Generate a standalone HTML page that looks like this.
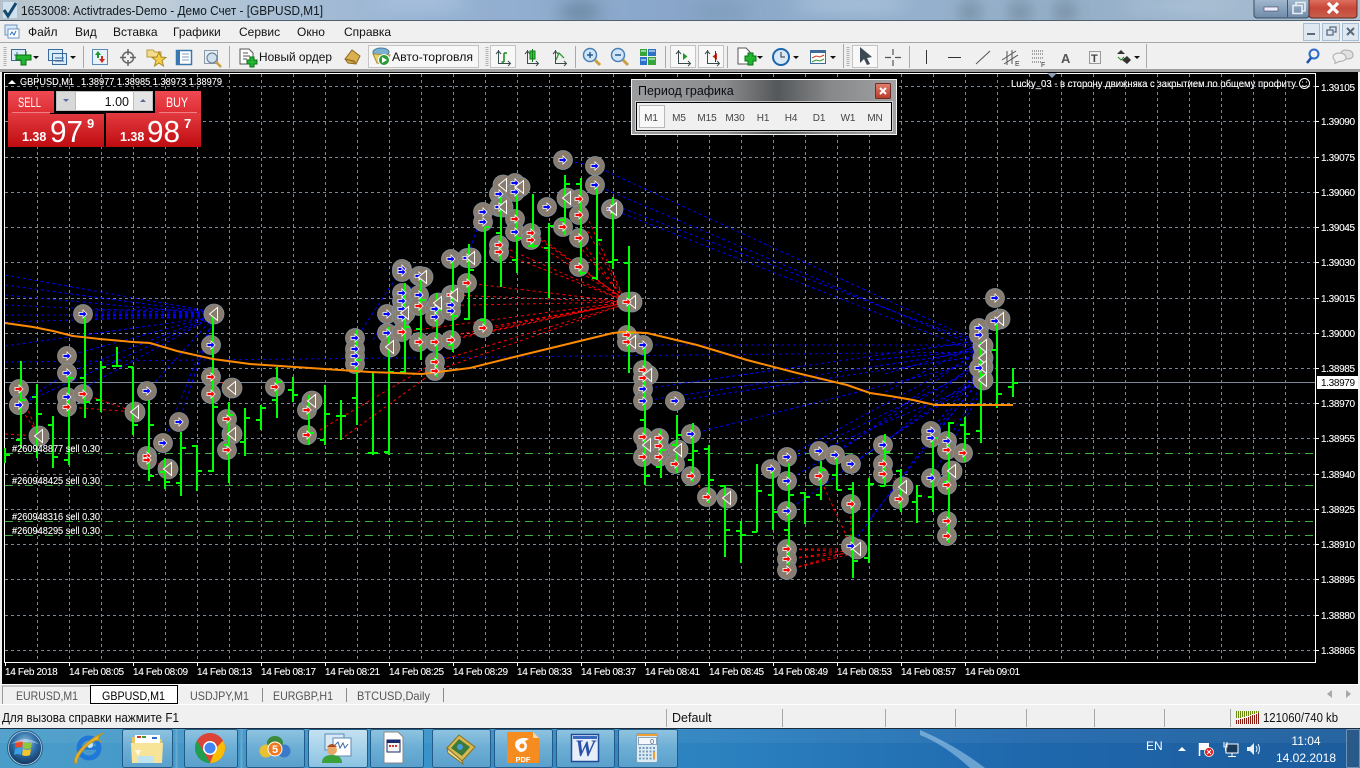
<!DOCTYPE html>
<html><head><meta charset="utf-8"><title>1653008: Activtrades-Demo</title>
<style>
html,body{margin:0;padding:0;width:1360px;height:768px;overflow:hidden;background:#f0f0f0}
svg{position:absolute;left:0;top:0;display:block}
text{font-family:"Liberation Sans","Noto Sans CJK SC",sans-serif}
.m{font-size:12px;fill:#111}
.c{font-size:10px;fill:#fff;letter-spacing:-.35px;stroke:#fff;stroke-width:.1}
.c2{font-size:10.5px;fill:#fff;stroke:#fff;stroke-width:.1}
.p{font-size:10px;fill:#444;text-anchor:middle;letter-spacing:-.1px}
.t{font-size:12px;fill:#555}
.cr{shape-rendering:crispEdges}
.ci{opacity:var(--c,1)}.ar{opacity:var(--a,1)}
</style></head><body>
<svg width="1360" height="768" viewBox="0 0 1360 768" xmlns="http://www.w3.org/2000/svg">
<defs>
<filter id="bl" x="-50%" y="-100%" width="200%" height="300%"><feGaussianBlur stdDeviation="9"/></filter>
<linearGradient id="tg" x1="0" x2="1" y1="0" y2="0"><stop offset="0" stop-color="#aebcc6"/><stop offset=".12" stop-color="#b5c6d4"/><stop offset=".3" stop-color="#8fadd0"/><stop offset=".5" stop-color="#7f9fc6"/><stop offset=".7" stop-color="#8eabc8"/><stop offset=".85" stop-color="#8faac4"/><stop offset="1" stop-color="#a9bfd2"/></linearGradient>
<linearGradient id="red" x1="0" x2="0" y1="0" y2="1"><stop offset="0" stop-color="#e23a40"/><stop offset="1" stop-color="#c00c10"/></linearGradient>
<linearGradient id="red2" x1="0" x2="0" y1="0" y2="1"><stop offset="0" stop-color="#ee4a52"/><stop offset="1" stop-color="#dd2b32"/></linearGradient>
<linearGradient id="tb" x1="0" x2="1" y1="0" y2="0"><stop offset="0" stop-color="#4b9dc9"/><stop offset=".3" stop-color="#3b93c8"/><stop offset=".55" stop-color="#2a7fbe"/><stop offset=".75" stop-color="#1f68ad"/><stop offset="1" stop-color="#1c5c9c"/></linearGradient>
<linearGradient id="btn" x1="0" x2="0" y1="0" y2="1"><stop offset="0" stop-color="#8fc4e0"/><stop offset=".5" stop-color="#6badd4"/><stop offset="1" stop-color="#5aa0cc"/></linearGradient>
<linearGradient id="btna" x1="0" x2="0" y1="0" y2="1"><stop offset="0" stop-color="#c4e2f2"/><stop offset="1" stop-color="#8ac2e2"/></linearGradient>
<linearGradient id="pw" x1="0" x2="1" y1="0" y2="0"><stop offset="0" stop-color="#9a9c9e"/><stop offset=".35" stop-color="#8a8c8e"/><stop offset=".55" stop-color="#55585a"/><stop offset=".75" stop-color="#86888a"/><stop offset="1" stop-color="#a0a2a4"/></linearGradient>
<linearGradient id="close" x1="0" x2="0" y1="0" y2="1"><stop offset="0" stop-color="#e08070"/><stop offset="1" stop-color="#b83a28"/></linearGradient>
<linearGradient id="wclose" x1="0" x2="0" y1="0" y2="1"><stop offset="0" stop-color="#e27a68"/><stop offset=".5" stop-color="#c8483a"/><stop offset="1" stop-color="#c8604c"/></linearGradient>
<linearGradient id="wb" x1="0" x2="0" y1="0" y2="1"><stop offset="0" stop-color="#a6bcd2"/><stop offset="1" stop-color="#6e8aa8"/></linearGradient>
<radialGradient id="orb" cx=".5" cy=".35" r=".7"><stop offset="0" stop-color="#9ac8e4"/><stop offset=".5" stop-color="#2c6ca6"/><stop offset="1" stop-color="#0e2c52"/></radialGradient>
<g id="rc"><circle class="ci" r="9.5" fill="#877c6e" stroke="#80919f" stroke-width=".8"/><path class="ar" d="M-4-1.5H0V-4L4 0 0 4V1.5H-4Z" fill="#f00" stroke="#fff" stroke-width=".8"/></g>
<g id="bc"><circle class="ci" r="9.5" fill="#877c6e" stroke="#80919f" stroke-width=".8"/><path class="ar" d="M-4-1.5H0V-4L4 0 0 4V1.5H-4Z" fill="#00f" stroke="#fff" stroke-width=".8"/></g>
<g id="tr"><circle class="ci" r="10" fill="#877c6e" stroke="#80919f" stroke-width=".8"/><path class="ar" d="M-4.500 0 3.500-6.500V6.500Z" fill="#877c6e" stroke="#fff" stroke-width="1"/></g>
<g id="mk">
<use href="#rc" x="19" y="389"/><use href="#rc" x="19" y="405"/><use href="#bc" x="19" y="405"/><use href="#tr" x="39" y="436"/>
<use href="#bc" x="83" y="314"/><use href="#bc" x="67" y="356"/><use href="#bc" x="67" y="373"/><use href="#bc" x="67" y="397"/><use href="#rc" x="67" y="407"/><use href="#rc" x="83" y="394"/>
<use href="#tr" x="135" y="412"/><use href="#bc" x="147" y="391"/><use href="#bc" x="179" y="422"/><use href="#bc" x="163" y="443"/><use href="#rc" x="147" y="456"/><use href="#rc" x="147" y="460"/><use href="#tr" x="168" y="469"/>
<use href="#tr" x="214" y="314"/><use href="#bc" x="211" y="345"/><use href="#rc" x="211" y="377"/><use href="#rc" x="211" y="394"/><use href="#tr" x="232" y="388"/><use href="#rc" x="227" y="419"/><use href="#tr" x="232" y="434"/><use href="#rc" x="227" y="450"/>
<use href="#rc" x="275" y="387"/><use href="#rc" x="307" y="410"/><use href="#tr" x="312" y="401"/><use href="#rc" x="307" y="435"/>
<use href="#bc" x="355" y="338"/><use href="#bc" x="355" y="349"/><use href="#bc" x="355" y="356"/><use href="#bc" x="355" y="364"/>
<use href="#bc" x="387" y="314"/><use href="#bc" x="387" y="333"/><use href="#tr" x="390" y="347"/><use href="#bc" x="402" y="269"/><use href="#bc" x="402" y="272"/><use href="#bc" x="419" y="276"/><use href="#tr" x="423" y="277"/>
<use href="#bc" x="402" y="293"/><use href="#bc" x="402" y="301"/><use href="#bc" x="402" y="309"/><use href="#bc" x="402" y="317"/><use href="#tr" x="405" y="313"/><use href="#bc" x="419" y="295"/><use href="#rc" x="419" y="306"/><use href="#rc" x="402" y="332"/><use href="#rc" x="419" y="342"/>
<use href="#bc" x="435" y="309"/><use href="#bc" x="435" y="317"/><use href="#tr" x="438" y="303"/><use href="#rc" x="435" y="342"/><use href="#rc" x="435" y="362"/><use href="#rc" x="435" y="371"/><use href="#rc" x="451" y="295"/><use href="#tr" x="454" y="295"/><use href="#bc" x="451" y="305"/><use href="#bc" x="451" y="311"/><use href="#rc" x="451" y="340"/><use href="#bc" x="451" y="259"/><use href="#bc" x="467" y="258"/><use href="#tr" x="471" y="258"/><use href="#rc" x="467" y="283"/>
<use href="#bc" x="483" y="212"/><use href="#bc" x="483" y="222"/><use href="#rc" x="483" y="328"/><use href="#rc" x="499" y="245"/><use href="#rc" x="499" y="252"/><use href="#bc" x="499" y="194"/><use href="#bc" x="499" y="207"/><use href="#tr" x="503" y="185"/><use href="#tr" x="503" y="207"/><use href="#bc" x="515" y="183"/><use href="#bc" x="515" y="192"/><use href="#tr" x="520" y="187"/><use href="#rc" x="515" y="219"/><use href="#bc" x="515" y="232"/><use href="#rc" x="531" y="233"/><use href="#rc" x="531" y="240"/><use href="#bc" x="547" y="207"/>
<use href="#bc" x="563" y="160"/><use href="#rc" x="563" y="227"/><use href="#tr" x="567" y="198"/><use href="#rc" x="579" y="199"/><use href="#rc" x="579" y="215"/><use href="#rc" x="579" y="238"/><use href="#rc" x="579" y="267"/><use href="#bc" x="595" y="166"/><use href="#bc" x="595" y="185"/><use href="#bc" x="611" y="209"/><use href="#tr" x="613" y="209"/>
<use href="#tr" x="632" y="302"/><use href="#rc" x="627" y="302"/><use href="#tr" x="632" y="342"/><use href="#rc" x="627" y="335"/><use href="#rc" x="627" y="342"/>
<use href="#bc" x="643" y="345"/><use href="#tr" x="648" y="375"/><use href="#rc" x="643" y="370"/><use href="#rc" x="643" y="378"/><use href="#bc" x="643" y="389"/><use href="#bc" x="643" y="401"/><use href="#bc" x="675" y="401"/><use href="#bc" x="691" y="434"/>
<use href="#tr" x="647" y="445"/><use href="#rc" x="643" y="437"/><use href="#rc" x="643" y="457"/><use href="#rc" x="659" y="438"/><use href="#rc" x="659" y="446"/><use href="#rc" x="659" y="457"/><use href="#tr" x="678" y="450"/><use href="#rc" x="675" y="464"/><use href="#rc" x="691" y="476"/><use href="#rc" x="707" y="497"/><use href="#tr" x="727" y="498"/>
<use href="#bc" x="771" y="469"/><use href="#bc" x="787" y="457"/><use href="#bc" x="787" y="481"/><use href="#bc" x="787" y="511"/><use href="#rc" x="787" y="549"/><use href="#rc" x="787" y="559"/><use href="#rc" x="787" y="570"/>
<use href="#bc" x="819" y="451"/><use href="#rc" x="819" y="476"/><use href="#bc" x="835" y="455"/><use href="#bc" x="851" y="464"/><use href="#rc" x="851" y="504"/><use href="#tr" x="857" y="549"/><use href="#bc" x="851" y="546"/>
<use href="#bc" x="883" y="445"/><use href="#rc" x="883" y="464"/><use href="#rc" x="883" y="474"/><use href="#tr" x="903" y="487"/><use href="#rc" x="899" y="499"/>
<use href="#bc" x="931" y="431"/><use href="#bc" x="931" y="438"/><use href="#bc" x="931" y="478"/><use href="#bc" x="947" y="441"/><use href="#tr" x="952" y="471"/><use href="#rc" x="947" y="450"/><use href="#rc" x="963" y="453"/><use href="#rc" x="947" y="485"/><use href="#rc" x="947" y="521"/><use href="#rc" x="947" y="536"/>
<use href="#tr" x="983" y="346"/><use href="#tr" x="983" y="358"/><use href="#tr" x="983" y="367"/><use href="#tr" x="983" y="380"/><use href="#bc" x="979" y="328"/><use href="#bc" x="979" y="335"/><use href="#bc" x="979" y="368"/><use href="#bc" x="995" y="298"/><use href="#tr" x="1000" y="319"/><use href="#bc" x="995" y="321"/>
</g>
</defs>

<!-- title bar -->
<rect width="1360" height="21" fill="url(#tg)"/>
<g filter="url(#bl)" opacity=".8"><ellipse cx="100" cy="4" rx="80" ry="5" fill="#d0d8dc"/><ellipse cx="580" cy="12" rx="22" ry="8" fill="#4a6880"/><ellipse cx="720" cy="12" rx="30" ry="6" fill="#6a8aa8"/><ellipse cx="970" cy="12" rx="9" ry="8" fill="#3a5468"/><ellipse cx="1020" cy="12" rx="9" ry="8" fill="#3a5468"/><ellipse cx="1065" cy="12" rx="9" ry="8" fill="#3a5468"/><ellipse cx="420" cy="2" rx="50" ry="5" fill="#b8d0e8"/><ellipse cx="850" cy="4" rx="60" ry="5" fill="#c0d8ec"/><ellipse cx="1180" cy="6" rx="60" ry="5" fill="#b8cfe4"/></g>
<rect y="0" width="1360" height="21" fill="#fff" opacity=".08"/>
<rect y="20" width="1360" height="1" fill="#50606e"/>
<path d="M3 2H17V18H3Z" fill="#cfe0ee"/><path d="M4 10 8 16 16 3" fill="none" stroke="#13486e" stroke-width="3"/>
<text x="21" y="15" fill="#10181c" textLength="302" lengthAdjust="spacingAndGlyphs" style="font-size:12.500px">1653008: Activtrades-Demo - Демо Счет - [GBPUSD,M1]</text>
<!-- window buttons -->
<rect x="1254" y="-2" width="55" height="20" rx="3" fill="url(#wb)" stroke="#3c4e60"/>
<rect x="1309" y="-2" width="48" height="20" rx="3" fill="url(#wclose)" stroke="#5a2a24"/>
<path d="M1287.500 0V17" stroke="#42566a"/>
<rect x="1264" y="7" width="14" height="4" fill="#eef" stroke="#445" stroke-width=".6"/>
<path d="M1293 5.500h9v8h-9zM1296 5V2.500h9V11h-2.500" fill="none" stroke="#e8eef4" stroke-width="1.600"/>
<path d="M1328 3 1338 13M1338 3 1328 13" stroke="#fff" stroke-width="3.200"/>

<!-- menu -->
<rect y="21" width="1360" height="22" fill="#f0f0f0"/>
<rect y="42" width="1360" height="1" fill="#a8a8a8"/>
<path d="M5 25h12v10h-12z" fill="#d8e8f6" stroke="#6a96c4"/><path d="M8 29h11v9H8z" fill="#fff" stroke="#6a96c4"/><path d="M10 35l2-3 2 3 2-4" fill="none" stroke="#2a6ab0"/>
<text class="m" x="28" y="36">Файл</text><text class="m" x="75" y="36">Вид</text><text class="m" x="113" y="36">Вставка</text><text class="m" x="173" y="36">Графики</text><text class="m" x="239" y="36">Сервис</text><text class="m" x="297" y="36">Окно</text><text class="m" x="344" y="36">Справка</text>
<!-- mdi -->
<g fill="#dfe8f1" stroke="#a6bed4"><rect x="1303.500" y="23.500" width="16" height="17"/><rect x="1322.500" y="23.500" width="17" height="17"/><rect x="1342.500" y="23.500" width="16" height="17"/></g>
<path d="M1307 34h8" stroke="#5a6a7c" stroke-width="2"/><path d="M1327 30h6v5h-6zM1330 29v-2h6v5h-2" fill="none" stroke="#5a6a7c" stroke-width="1.300"/><path d="M1347 28l7 7M1354 28l-7 7" stroke="#5a6a7c" stroke-width="2"/>

<!-- toolbar -->
<rect y="43" width="1360" height="27" fill="#f0f0f0"/>
<rect y="69" width="1360" height="3" fill="#a0a0a0"/>
<g stroke="#a9a9a9" fill="none" class="cr"><path d="M83.500 46v22M229.500 46v22M575.500 46v22M665.500 46v22M727.500 46v22M843.500 44v24M909.500 46v22M1146.500 44v24"/></g>
<g stroke="#b0b0b0" stroke-dasharray="1 1" stroke-width="3" fill="none"><path d="M5 47v20M487 47v20M848 47v20"/></g>
<g fill="#e8e8e8" stroke="#c4c4c4"><rect x="368.500" y="45.500" width="110" height="22" fill="#f7f7f7"/><rect x="490.500" y="45.500" width="25" height="22" fill="#f8f8f8"/><rect x="670.500" y="45.500" width="25" height="22" fill="#f8f8f8"/><rect x="698.500" y="45.500" width="25" height="22" fill="#f8f8f8"/><rect x="852.500" y="45.500" width="25" height="22" fill="#f8f8f8"/></g>
<!-- icons left -->
<path d="M11.500 49.500h14v11h-14z" fill="#dcebf8" stroke="#3a6a9a"/><path d="M14 55h6M17 52v6" stroke="#3a6a9a"/>
<path d="M21 55h5v-4h0v4h5v5h-5v5h-5v-5h-5v-5z" fill="#23b52f" stroke="#0a7016"/>
<path d="M33 56h6l-3 3z" fill="#111"/>
<path d="M48.500 49.500h14v11h-14zM52.500 53.500h14v11h-14z" fill="#dcebf8" stroke="#3a6a9a"/><path d="M55 58h9M55 61h9" stroke="#3a6a9a"/>
<path d="M70 56h6l-3 3z" fill="#111"/>
<rect x="92.500" y="49.500" width="15" height="15" fill="#e8f2fa" stroke="#5a8ab8"/><path d="M98 51l3 4h-2v3h-2v-3h-2z" fill="#1f9a2a"/><path d="M102 63l-3-4h2v-3h2v3h2z" fill="#d02a1a"/>
<circle cx="128" cy="57.500" r="5.500" fill="none" stroke="#666" stroke-width="1.500"/><path d="M128 49v6M128 60v6M120 57.500h6M130 57.500h6" stroke="#666" stroke-width="1.500"/>
<path d="M147 50h6l2 2h6v5h-14z" fill="#f5dc8c" stroke="#b89a40"/><path d="M159 52l2 5 5 .5-4 3 1.500 5.500-4.500-3-4.500 3 1.500-5.500-4-3 5-.5z" fill="#f4cf4c" stroke="#a88a20"/>
<rect x="176.500" y="50.500" width="15" height="14" fill="#fff" stroke="#3a76b0" stroke-width="1.500"/><path d="M176 51h4v13h-4z" fill="#3a76b0"/><path d="M182 54h7M182 57h7M182 60h7" stroke="#7a9cc0"/>
<rect x="204.500" y="50.500" width="13" height="13" fill="#e4ecf4" stroke="#8a9aa8"/><circle cx="212" cy="58" r="5" fill="#cfe0ee" stroke="#64788c"/><path d="M216 62l5 5" stroke="#c8a040" stroke-width="2.500"/>
<path d="M240 49h9l4 4v11h-13z" fill="#fff" stroke="#555"/><path d="M243 53h5M243 56h7M243 59h4" stroke="#555"/>
<path d="M247 60h3v-3h4v3h3v4h-3v3h-4v-3h-3z" fill="#23b52f" stroke="#0a7016"/>
<text class="m" x="259" y="61" textLength="73" lengthAdjust="spacingAndGlyphs">Новый ордер</text>
<path d="M345 59l7-9 8 6-4 8-8-1z" fill="#d8b050" stroke="#8a6a20"/><path d="M345 59l9 2 2 3" fill="#b88a30" stroke="#8a6a20"/>
<ellipse cx="381" cy="52" rx="8" ry="4" fill="#7ab0d0" stroke="#4a7a9a"/><path d="M373 54l4 9 8 1 5-9z" fill="#e8d070" stroke="#a89030"/><circle cx="384" cy="60" r="5.500" fill="#2c9a38" stroke="#fff"/><path d="M382 57l5 3-5 3z" fill="#fff"/>
<text class="m" x="392" y="61" textLength="81" lengthAdjust="spacingAndGlyphs">Авто-торговля</text>
<!-- chart types -->
<g fill="none" stroke="#3c4c4c"><path d="M498.500 50v13.500h12M496 54l2.500-3 2.500 3M508 61l2.500 2.500-2.500 2.500"/><path d="M527.500 50v13.500h11M525 54l2.500-3 2.500 3M536 61l2.500 2.500-2.500 2.500"/><path d="M555.500 50v13.500h11M553 54l2.500-3 2.500 3M564 61l2.500 2.500-2.500 2.500"/></g>
<path d="M504 53v9m-2.500 0h2.500m0-9h3" fill="none" stroke="#128a1a" stroke-width="1.500"/>
<rect x="530" y="51" width="5" height="8" fill="#2fce37" stroke="#127a1a"/><path d="M532.500 49v13" stroke="#127a1a"/>
<path d="M556 60l3-7 5 5" fill="none" stroke="#2a9a32" stroke-width="1.300"/>
<g stroke="#4a7fb8" fill="#cfe6f8" stroke-width="1.500"><circle cx="590" cy="55" r="6.500"/><circle cx="618" cy="55" r="6.500"/></g>
<path d="M587 55h6M590 52v6M615 55h6" stroke="#2a5a8a" stroke-width="1.500"/>
<path d="M595 60l5 5M623 60l5 5" stroke="#c8a040" stroke-width="3"/>
<g class="cr"><rect x="640" y="49" width="7" height="7" fill="#38a53c"/><rect x="648" y="49" width="8" height="7" fill="#2e72c8"/><rect x="640" y="57" width="7" height="8" fill="#2e72c8"/><rect x="648" y="57" width="8" height="8" fill="#38a53c"/></g>
<path d="M641 51h5M649 59h6M641 60h5M649 51h6" stroke="#fff"/>
<g fill="none" stroke="#3c4c4c"><path d="M678.500 50v13.500h12M676 54l2.500-3 2.500 3M688 61l2.500 2.500-2.500 2.500M707.500 50v13.500h12M705 54l2.500-3 2.500 3M717 61l2.500 2.500-2.500 2.500"/></g><path d="M683 53l4.500 3.500-4.500 3.500z" fill="#1f9a2a"/><path d="M717 53l-4.500 3.500 4.500 3.500z" fill="#c02a1a"/><path d="M715.500 51v11" stroke="#1a3a6a"/>
<path d="M738 48h8l4 4v12h-12z" fill="#fff" stroke="#555"/><path d="M745 56h3v-3h5v3h3v5h-3v4h-5v-4h-3z" fill="#23b52f" stroke="#0a7016"/><path d="M757 56h6l-3 3z" fill="#111"/>
<circle cx="781" cy="57" r="8" fill="#d8e8f4" stroke="#1a66b0" stroke-width="2"/><path d="M781 52v5h4" fill="none" stroke="#333"/><path d="M793 56h6l-3 3z" fill="#111"/>
<rect x="810.500" y="50.500" width="15" height="13" fill="#fff" stroke="#3c6a98"/><path d="M810 51h16v2h-16z" fill="#3c6a98"/><path d="M812 58l4-2 4 1 4-2" fill="none" stroke="#c04020"/><path d="M812 62l4-2 4 1 4-2" fill="none" stroke="#2a9a32"/><path d="M830 56h6l-3 3z" fill="#111"/>
<path d="M860 47l0 16 4-4 3 6 3-1-3-6 5-1z" fill="#3c4a54"/>
<path d="M893 49v6M893 60v6M885 57.500h6M895 57.500h6" stroke="#555" stroke-width="1.200"/>
<path d="M926.500 50v14" stroke="#333"/><path d="M948 57.500h13" stroke="#333"/><path d="M976 64l14-13" stroke="#555"/>
<path d="M1002 60l14-9M1004 64l14-9M1007 51v14M1012 50v14" stroke="#555" fill="none"/><text x="1015" y="66" style="font-size:7px;fill:#333">E</text>
<path d="M1032 51h12M1032 54h12M1032 58h12M1032 62h9" stroke="#555" stroke-dasharray="1 1"/><text x="1041" y="67" style="font-size:7px;fill:#333">F</text>
<text x="1061" y="63" style="font-size:13px;fill:#555;font-weight:bold">A</text>
<rect x="1089.500" y="51.500" width="11" height="12" fill="none" stroke="#444" stroke-dasharray="1 1"/><text x="1091" y="62" style="font-size:11px;fill:#444;font-weight:bold">T</text>
<path d="M1117 54l4-4 4 4zM1122 60l5-4 4 4-4 4z" fill="#333"/><path d="M1118 57l3 3 3-3" fill="none" stroke="#2a8a2a"/><path d="M1134 56h6l-3 3z" fill="#111"/>
<circle cx="1314" cy="54" r="4.500" fill="none" stroke="#2a6ac8" stroke-width="2"/><path d="M1311 58l-4 5" stroke="#1a50b0" stroke-width="2.500"/>
<path d="M1345 50c6 0 8 2 8 5s-3 4-6 4h-6l0-4c0-3 1-5 4-5z" fill="#e0e0e0" stroke="#aaa"/><path d="M1339 53c4 0 7 2 7 4.500s-3 4-7 4l-4 2v-3c-1-1-2-2-2-3.500 0-2.500 3-4 6-4z" fill="#f0f0f0" stroke="#aaa"/>

<!-- chart area -->
<rect x="2" y="72" width="1356" height="612" fill="#000" class="cr"/>
<rect x="0" y="684" width="1360" height="1" fill="#fff"/>
<!-- grid -->
<g class="cr" stroke="#778899" stroke-dasharray="3 3" fill="none">
<path d="M37.500 74V662M69.500 74V662M101.500 74V662M133.500 74V662M165.500 74V662M197.500 74V662M229.500 74V662M261.500 74V662M293.500 74V662M325.500 74V662M357.500 74V662M389.500 74V662M421.500 74V662M453.500 74V662M485.500 74V662M517.500 74V662M549.500 74V662M581.500 74V662M613.500 74V662M645.500 74V662M677.500 74V662M709.500 74V662M741.500 74V662M773.500 74V662M805.500 74V662M837.500 74V662M869.500 74V662M901.500 74V662M933.500 74V662M965.500 74V662M997.500 74V662M1029.500 74V662M1061.500 74V662M1093.500 74V662M1125.500 74V662M1157.500 74V662M1189.500 74V662M1221.500 74V662M1253.500 74V662M1285.500 74V662"/>
<path d="M5 86.500H1315M5 121.500H1315M5 157.500H1315M5 192.500H1315M5 227.500H1315M5 262.500H1315M5 298.500H1315M5 333.500H1315M5 368.500H1315M5 403.500H1315M5 438.500H1315M5 474.500H1315M5 509.500H1315M5 544.500H1315M5 579.500H1315M5 615.500H1315M5 650.500H1315"/>
</g>
<!-- order lines -->
<g class="cr" stroke="#3cb43c" stroke-dasharray="8 5 2 5" fill="none"><path d="M5 453.500H1315M5 485.500H1315M5 521.500H1315M5 535.500H1315"/></g>
<path d="M5 382.500H1315" stroke="#778899" class="cr"/>
<!-- frame -->
<path d="M4.500 73.500H1315.500V662.500H4.500Z" fill="none" stroke="#fff" class="cr"/>
<path class="cr" stroke="#fff" d="M5.500 662v4M69.500 662v4M133.500 662v4M197.500 662v4M261.500 662v4M325.500 662v4M389.500 662v4M453.500 662v4M517.500 662v4M581.500 662v4M645.500 662v4M709.500 662v4M773.500 662v4M837.500 662v4M901.500 662v4M965.500 662v4M1316 86.500h3M1316 121.500h3M1316 157.500h3M1316 192.500h3M1316 227.500h3M1316 262.500h3M1316 298.500h3M1316 333.500h3M1316 368.500h3M1316 403.500h3M1316 438.500h3M1316 474.500h3M1316 509.500h3M1316 544.500h3M1316 579.500h3M1316 615.500h3M1316 650.500h3"/>

<!-- trade lines -->
<g fill="none" stroke="#00f" stroke-dasharray="3 3" stroke-width="1">
<path d="M5 275 213 312M5 285 213 313M5 295 213 314M5 305 213 314M5 315 213 315M5 322 213 316M5 346 213 317M83 312 213 312M83 314 213 314M83 316 213 316M83 318 213 318M85 310 213 310"/>
<path d="M67 356 213 316M67 373 213 316M67 397 213 317M147 391 213 318M179 422 213 320M163 443 213 320M19 405 67 373M19 405 213 317"/>
<path d="M373 340 402 293M355 340 402 269M387 314 402 301M387 333 419 295M419 276 402 300M467 258 451 259M483 212 467 258M499 194 483 222M563 160 595 166M547 207 563 198"/>
<path d="M595 166 985 345M595 185 985 350M611 209 985 355M611 204 985 346M643 345 985 345M643 389 985 340M643 401 985 350M675 401 985 355M691 434 985 360M771 469 985 365M787 457 985 350M787 481 985 360M787 511 985 370M819 451 985 380M835 455 985 345M851 464 985 375M883 445 985 352M931 431 985 360M931 438 985 375M931 478 985 385M947 441 985 380M869 520 979 380M851 546 980 370"/>
<path d="M5 362 985 352M870 360 985 350M885 392 985 340M885 374 985 344"/>
</g>
<g fill="none" stroke="#f00" stroke-dasharray="3 3" stroke-width="1">
<path d="M19 389 39 436M19 405 39 436M5 434 39 436M83 394 135 412M67 407 135 412M147 458 168 469M211 377 232 388M211 394 232 388M227 419 232 434"/>
<path d="M402 332 625 302M419 306 625 302M419 342 625 303M435 342 625 303M435 362 625 304M435 371 625 304M451 295 625 302M451 340 625 303M467 283 625 302M483 328 625 303M499 245 625 301M499 252 625 301M515 219 625 300M531 233 625 300M531 240 625 301M563 227 625 300M579 199 625 300M579 215 625 300M579 238 625 300M579 267 625 301M340 440 435 371M320 430 435 362"/>
<path d="M659 438 678 450M659 446 678 450M675 464 678 450M691 476 707 497M707 497 727 498M787 549 851 549M787 549 851 552M787 559 851 550M787 559 851 553M787 570 851 551M787 570 851 554M819 476 851 546M851 504 851 546M883 464 903 487M883 474 903 487M899 499 903 487"/>
</g>

<use href="#mk" style="--c:1;--a:0"/>
<!-- bars -->
<path class="cr" fill="none" stroke="#0f0" stroke-width="2" d="M5 448V463M5 455H10
M21 361V448M16 440H21M21 400H26
M37 384V458M32 397H37M37 414H42
M53 416V468M48 425H53M53 457H58
M69 376V465M64 460H69M69 378H74
M85 315V418M80 378H85M85 402H90
M101 361V412M96 400H101M101 367H106
M117 347V367M112 366H117M117 366H122
M133 367V435M128 367H133M133 425H138
M149 400V481M149 425H154M149 476H154
M165 458V489M160 472H165M165 482H170
M181 432V496M176 483H181M181 448H186
M197 445V491M192 446H197M197 471H202
M213 313V472M208 471H213M213 407H218
M229 402V483M224 445H229M229 415H234
M245 408V456M240 442H245M245 418H250
M261 405V430M256 420H261M261 408H266
M277 367V418M272 400H277M277 382H282
M293 377V402M288 390H293M293 395H298
M309 395V445M304 410H309M309 433H314
M325 385V445M320 440H325M325 414H330
M341 400V440M336 416H341M341 416H346
M357 330V425M352 398H357M357 360H362
M373 372V455M368 453H373M373 453H378
M389 327V455M384 452H389M389 372H394
M405 283V373M400 372H405M405 327H410
M421 280V360M416 329H421M421 300H426
M437 293V377M432 360H437M437 310H442
M453 257V352M448 345H453M453 316H458
M469 244V320M464 319H469M469 270H474
M485 227V325M480 320H485M485 227H490
M501 197V287M496 233H501M501 210H506
M517 190V273M512 260H517M517 238H522
M533 194V248M528 246H533M533 246H538
M549 223V298M544 248H549M549 226H554
M565 175V235M560 220H565M565 184H570
M581 178V275M576 184H581M581 273H586
M597 185V280M592 278H597M597 240H602
M613 197V269M608 262H613M613 260H618
M629 246V373M624 263H629M629 333H634
M645 343V485M640 420H645M645 476H650
M661 430V478M656 467H661M661 450H666
M677 415V473M672 445H677M677 435H682
M693 423V482M688 460H693M693 451H698
M709 445V503M704 449H709M709 480H714
M725 486V557M720 486H725M725 530H730
M741 521V563M736 531H741M741 535H746
M757 464V532M752 532H757M757 491H762
M773 470V530M768 495H773M773 512H778
M789 463V565M784 530H789M789 495H794
M805 492V524M800 493H805M805 497H810
M821 461V500M816 495H821M821 470H826
M837 458V490M832 475H837M837 490H842
M853 482V578M848 489H853M853 561H858
M869 478V563M864 558H869M869 484H874
M885 434V485M880 486H885M885 452H890
M901 469V512M896 471H901M901 490H906
M917 485V523M912 502H917M917 496H922
M933 438V512M928 497H933M933 438H938
M949 422V543M944 482H949M949 423H954
M965 417V462M960 425H965M965 434H970
M981 342V443M976 431H981M981 375H986
M997 323V408M992 350H997M997 394H1002
M1013 368V397M1008 387H1013M1013 383H1018"/>
<!-- EMA -->
<path fill="none" stroke="#ff8c00" stroke-width="2" d="M5 323 33 327 53 331 73 336 100 339 133 342 150 343 177 351 213 359 250 364 310 368 370 372 422 374 470 368 510 358 543 350 580 341 613 333 623 332 647 333 697 345 747 360 797 373 847 385 870 393 890 396 913 400 935 405 1013 405"/>
<use href="#mk" style="--c:0;--a:1"/>

<!-- chart text -->
<path d="M8 84h8l-4-4z" fill="#fff"/>
<text class="c2" x="20" y="85" textLength="54" lengthAdjust="spacingAndGlyphs">GBPUSD,M1</text><text class="c2" x="81" y="85" textLength="141" lengthAdjust="spacingAndGlyphs">1.38977 1.38985 1.38973 1.38979</text>
<text class="c2" x="12" y="452" textLength="88" lengthAdjust="spacingAndGlyphs">#260948877 sell 0.30</text>
<text class="c2" x="12" y="484" textLength="88" lengthAdjust="spacingAndGlyphs">#260948425 sell 0.30</text>
<text class="c2" x="12" y="520" textLength="88" lengthAdjust="spacingAndGlyphs">#260948316 sell 0.30</text>
<text class="c2" x="12" y="534" textLength="88" lengthAdjust="spacingAndGlyphs">#260948295 sell 0.30</text>
<path d="M1047 73h10l-5 5z" fill="#8aa0b4"/>
<text class="c2" x="1011" y="87" textLength="285" lengthAdjust="spacingAndGlyphs">Lucky_03 - в сторону движняка с закрытием по общему профиту</text>
<circle cx="1304.500" cy="83.500" r="5" fill="none" stroke="#fff"/><path d="M1302 82h1M1306 82h1" stroke="#fff"/><path d="M1302 85.500q2.500 2 5 0" fill="none" stroke="#fff"/>
<g>
<text class="c" x="1321" y="91">1.39105</text><text class="c" x="1321" y="125">1.39090</text><text class="c" x="1321" y="161">1.39075</text><text class="c" x="1321" y="196">1.39060</text><text class="c" x="1321" y="231">1.39045</text><text class="c" x="1321" y="266">1.39030</text><text class="c" x="1321" y="302">1.39015</text><text class="c" x="1321" y="337">1.39000</text><text class="c" x="1321" y="372">1.38985</text><text class="c" x="1321" y="407">1.38970</text><text class="c" x="1321" y="442">1.38955</text><text class="c" x="1321" y="478">1.38940</text><text class="c" x="1321" y="513">1.38925</text><text class="c" x="1321" y="548">1.38910</text><text class="c" x="1321" y="583">1.38895</text><text class="c" x="1321" y="619">1.38880</text><text class="c" x="1321" y="654">1.38865</text>
</g>
<rect x="1317" y="376" width="41" height="13" fill="#fff" class="cr"/>
<text x="1321" y="386" style="font-size:10px;letter-spacing:-.35px;fill:#000">1.38979</text>
<g>
<text class="c" x="5" y="675">14 Feb 2018</text><text class="c" x="69" y="675">14 Feb 08:05</text><text class="c" x="133" y="675">14 Feb 08:09</text><text class="c" x="197" y="675">14 Feb 08:13</text><text class="c" x="261" y="675">14 Feb 08:17</text><text class="c" x="325" y="675">14 Feb 08:21</text><text class="c" x="389" y="675">14 Feb 08:25</text><text class="c" x="453" y="675">14 Feb 08:29</text><text class="c" x="517" y="675">14 Feb 08:33</text><text class="c" x="581" y="675">14 Feb 08:37</text><text class="c" x="645" y="675">14 Feb 08:41</text><text class="c" x="709" y="675">14 Feb 08:45</text><text class="c" x="773" y="675">14 Feb 08:49</text><text class="c" x="837" y="675">14 Feb 08:53</text><text class="c" x="901" y="675">14 Feb 08:57</text><text class="c" x="965" y="675">14 Feb 09:01</text>
</g>

<!-- one-click panel -->
<rect x="8" y="91" width="46" height="24" fill="url(#red2)"/><rect x="155" y="91" width="46" height="24" fill="url(#red2)"/>
<rect x="12" y="112.500" width="38" height="1" fill="#ffd0d0"/><rect x="159" y="112.500" width="38" height="1" fill="#ffd0d0"/>
<rect x="8" y="113" width="96" height="34" fill="url(#red)"/><rect x="106" y="113" width="95" height="34" fill="url(#red)"/>
<rect x="50" y="113" width="55" height="1" fill="#000"/>
<rect x="54" y="91" width="101" height="22" fill="#000"/>
<rect x="56" y="91" width="97" height="20" fill="#bdbdbd"/>
<rect x="57" y="92" width="18" height="18" fill="#d8d8d8"/><rect x="134" y="92" width="18" height="18" fill="#e4e4e4"/>
<rect x="76" y="92" width="57" height="18" fill="#fff"/>
<path d="M63 99h6l-3 3z" fill="#5a6aa0"/><path d="M140 102h6l-3-3z" fill="#5a6aa0"/>
<text x="129" y="106" text-anchor="end" style="font-size:12.500px;fill:#111">1.00</text>
<text x="18" y="107" textLength="23" lengthAdjust="spacingAndGlyphs" style="font-size:14px;fill:#fff">SELL</text>
<text x="166" y="107" textLength="22" lengthAdjust="spacingAndGlyphs" style="font-size:14px;fill:#fff">BUY</text>
<g fill="#fff"><text x="22" y="141" style="font-size:12.500px;font-weight:bold">1.38</text><text x="50" y="142" textLength="33" lengthAdjust="spacingAndGlyphs" style="font-size:31px">97</text><text x="87" y="128" style="font-size:13px;font-weight:bold">9</text>
<text x="120" y="141" style="font-size:12.500px;font-weight:bold">1.38</text><text x="147" y="142" textLength="33" lengthAdjust="spacingAndGlyphs" style="font-size:31px">98</text><text x="184" y="128" style="font-size:13px;font-weight:bold">7</text></g>

<!-- period window -->
<rect x="631.500" y="79.500" width="265" height="55" fill="url(#pw)" stroke="#f4f4f4"/>
<rect x="636.500" y="102.500" width="255" height="28" fill="#f0f0f0" stroke="#000"/>
<rect x="635.500" y="101.500" width="257" height="30" fill="none" stroke="#e8e8e8" opacity=".7"/>
<rect x="639.500" y="105.500" width="25" height="22" fill="#f8f8f8" stroke="#b8b8b8"/>
<text x="638" y="95" style="font-size:12.500px;fill:#0c0c14">Период графика</text>
<rect x="875.500" y="83.500" width="15" height="15" rx="1" fill="url(#close)" stroke="#6a3028"/>
<path d="M880 88l6 6M886 88l-6 6" stroke="#fff" stroke-width="2"/>
<text class="p" x="651" y="121">M1</text><text class="p" x="679" y="121">M5</text><text class="p" x="707" y="121">M15</text><text class="p" x="735" y="121">M30</text><text class="p" x="763" y="121">H1</text><text class="p" x="791" y="121">H4</text><text class="p" x="819" y="121">D1</text><text class="p" x="848" y="121">W1</text><text class="p" x="875" y="121">MN</text>

<!-- tabs -->
<rect y="685" width="1360" height="20" fill="#f0f0f0"/>
<path d="M2.500 704V686H90" fill="none" stroke="#9a9a9a" class="cr"/>
<path d="M0 704.500H1360" stroke="#fff" class="cr"/>
<rect x="90.500" y="685.500" width="87" height="18" fill="#fff" stroke="#000" class="cr"/>
<path d="M262.500 688v14M346.500 688v14M443.500 688v14" stroke="#8a8a8a" class="cr"/>
<text class="t" x="16" y="700" textLength="62" lengthAdjust="spacingAndGlyphs">EURUSD,M1</text><text class="t" x="102" y="700" textLength="63" lengthAdjust="spacingAndGlyphs" style="fill:#000">GBPUSD,M1</text><text class="t" x="190" y="700" textLength="59" lengthAdjust="spacingAndGlyphs">USDJPY,M1</text><text class="t" x="273" y="700" textLength="60" lengthAdjust="spacingAndGlyphs">EURGBP,H1</text><text class="t" x="357" y="700" textLength="73" lengthAdjust="spacingAndGlyphs">BTCUSD,Daily</text>
<path d="M1332 690v8l-5-4zM1346 690v8l5-4z" fill="#a8a8a8"/>

<!-- status -->
<rect y="705" width="1360" height="23" fill="#f0f0f0"/>
<path class="cr" stroke="#a8a8a8" d="M666.500 709v18M782.500 709v18M885.500 709v18M955.500 709v18M1026.500 709v18M1094.500 709v18M1164.500 709v18M1230.500 709v18"/>
<text x="2" y="722" style="font-size:12.500px;fill:#111" textLength="177" lengthAdjust="spacingAndGlyphs">Для вызова справки нажмите F1</text>
<text x="672" y="722" style="font-size:12.500px;fill:#111">Default</text>
<text x="1263" y="722" style="font-size:12.500px;fill:#111" textLength="75" lengthAdjust="spacingAndGlyphs">121060/740 kb</text>
<g class="cr" stroke-width="1"><path d="M1236.500 711v7M1238.500 711v7M1240.500 711v7M1242.500 711v6M1244.500 711v6M1246.500 711v5M1248.500 711v5M1250.500 711v4M1252.500 711v3M1254.500 711v3M1256.500 711v2M1258.500 711v2" stroke="#6a8a10"/><path d="M1236.500 724v-4M1238.500 724v-4M1240.500 724v-5M1242.500 724v-5M1244.500 724v-6M1246.500 724v-6M1248.500 724v-7M1250.500 724v-8M1252.500 724v-9M1254.500 724v-9M1256.500 724v-10M1258.500 724v-11" stroke="#8a1a10"/></g>

<!-- taskbar -->
<rect y="728" width="1360" height="40" fill="url(#tb)"/>
<rect y="728" width="1360" height="1" fill="#1a2c3e"/>
<rect y="729" width="1360" height="14" fill="#fff" opacity=".05"/>
<path d="M920 730Q955 745 985 768H970Q945 745 920 735Z" fill="#a8d0ee" opacity=".55"/>
<!-- start orb -->
<circle cx="25" cy="748" r="18" fill="#0f3a66" opacity=".6"/><circle cx="25" cy="748" r="16.500" fill="url(#orb)" stroke="#b8d0e0" stroke-width=".8"/>
<path d="M16 742q4-2 7 0l-1 6q-3-2-7 0z" fill="#e84a28"/><path d="M24 742q4 2 8 0l-1 6q-4 2-8 0z" fill="#8ec83a"/><path d="M15 749q4-2 7 0l-1 6q-3-2-7 0z" fill="#3aa0e4"/><path d="M23 749q4 2 8 0l-1 6q-4 2-8 0z" fill="#f4c82c"/>
<path d="M11 744q14-10 28 0q-14-4-28 0z" fill="#fff" opacity=".4"/>
<!-- IE -->
<circle cx="89" cy="748" r="10" fill="none" stroke="#1f78d8" stroke-width="5"/><path d="M80 748h18" stroke="#1f78d8" stroke-width="3.500"/><circle cx="90" cy="745" r="3" fill="#bfe3f8"/>
<path d="M75 763C72 755 90 737 104 733c-8 3-6 8-3 9-5-8-25 12-24 21z" fill="#e8b530" stroke="#c89518" stroke-width="1"/>
<!-- task buttons -->
<g stroke="#225a88" fill="url(#btn)"><rect x="122.500" y="729.500" width="50" height="38" rx="2"/><rect x="184.500" y="729.500" width="53" height="38" rx="2"/><rect x="246.500" y="729.500" width="58" height="38" rx="2"/><rect x="308.500" y="729.500" width="59" height="38" rx="2" fill="url(#btna)"/><rect x="370.500" y="729.500" width="53" height="38" rx="2"/><rect x="432.500" y="729.500" width="58" height="38" rx="2"/><rect x="494.500" y="729.500" width="58" height="38" rx="2"/><rect x="556.500" y="729.500" width="58" height="38" rx="2"/><rect x="618.500" y="729.500" width="59" height="38" rx="2"/></g>
<path d="M176.500 729v39M241.500 729v39" stroke="#6aa8d0" stroke-width="2"/>
<!-- folder -->
<path d="M132 737h9l2 2h19v24h-30z" fill="#e8c660"/><path d="M135 735h25v8h-25z" fill="#fff"/><path d="M137 736h4v2h-4z" fill="#d03a28"/><path d="M142 736h4v2h-4z" fill="#3a9a3a"/><path d="M152 737h5v2h-5z" fill="#2a6ac8"/><path d="M131 743h32l-1 20h-30z" fill="#f8e498"/><path d="M138 763v-7h16v7" fill="#bfe4f0"/><path d="M135 750l3 6 3-6z" fill="#fff" opacity=".8"/>
<!-- chrome -->
<circle cx="210" cy="748" r="15" fill="#db4437"/><path d="M223 740.500A15 15 0 0 1 210 763L216 748Z" fill="#fbbc05"/><path d="M210 763A15 15 0 0 1 197 740.500L204 752Z" fill="#1f9e50"/><path d="M197 740.500 204 752 216 748 223 740.500 210 741Z" fill="#db4437"/><circle cx="210" cy="748" r="7" fill="#fff"/><circle cx="210" cy="748" r="5.500" fill="#4285f4"/>
<!-- MT5 -->
<ellipse cx="275" cy="743" rx="8" ry="7" fill="#3c8a3a"/><circle cx="266" cy="751" r="6.500" fill="#e8c030"/><circle cx="284" cy="751" r="6.500" fill="#3a7ac8"/><circle cx="275" cy="749" r="7" fill="#f07820" stroke="#fff"/><text x="275" y="753" text-anchor="middle" style="font-size:11px;font-weight:bold;fill:#fff">5</text>
<!-- active -->
<rect x="325" y="734" width="19" height="16" fill="#d8e8f4" stroke="#5a8ab8"/><rect x="333" y="738" width="18" height="18" fill="#fff" stroke="#5a8ab8"/><path d="M335 745l3-3 2 6 3-5 2 5 3-4" fill="none" stroke="#3a6aa8"/><circle cx="332" cy="750" r="5" fill="#e8a868"/><path d="M322 763c0-6 4-8 10-8s10 2 10 8z" fill="#3aa03a"/><path d="M327 747q5-6 10 0z" fill="#a84a20"/>
<!-- doc -->
<path d="M384 732h14l5 5v26h-19z" fill="#fff" stroke="#888"/><rect x="387" y="740" width="13" height="12" fill="#f4f4f4" stroke="#1a2a6a"/><rect x="387" y="740" width="13" height="3" fill="#1a2a6a"/><path d="M389 746h2M392 746h2M395 746h2" stroke="#d03a28" stroke-width="2"/>
<!-- gold -->
<path d="M447 748l12-13 16 12-13 14z" fill="#d8b850" stroke="#8a7020"/><path d="M451 748l8-9 11 8-8 9z" fill="#3a7a3a"/><path d="M447 748l15 13 1 3-15-11z" fill="#f0e0a0" stroke="#8a7020"/><circle cx="460" cy="747" r="3" fill="#4a9ad8"/>
<!-- pdf -->
<path d="M507 732h26l6 6v25h-32z" fill="#f68b1f"/><path d="M533 732l6 6h-6z" fill="#fbd6a8"/><path d="M516 741q6-5 13-2-2 1-4 2l2 4q0 7-7 7-7-5-4-11z" fill="#fff"/><circle cx="522" cy="746" r="2.500" fill="#f68b1f"/><text x="523" y="762" text-anchor="middle" style="font-size:7.500px;font-weight:bold;fill:#fff">PDF</text>
<!-- word -->
<rect x="571.500" y="734.500" width="27" height="27" fill="#e8eef8" stroke="#1f4a9a" stroke-width="1.500"/><rect x="573" y="736" width="24" height="3" fill="#3a6ac0"/><text x="585" y="756" text-anchor="middle" style="font-family:'Liberation Serif',serif;font-size:23px;font-weight:bold;font-style:italic;fill:#2a52a8">W</text>
<!-- calc -->
<rect x="636.500" y="733.500" width="21" height="29" rx="2" fill="#dcecf6" stroke="#7aa0bc"/><rect x="637" y="734" width="20" height="2" fill="#f0a030"/><rect x="638.500" y="737.500" width="18" height="7" fill="#f4f8fc" stroke="#8aa4bc"/><text x="654" y="744" text-anchor="end" style="font-size:7px;fill:#3a5a7a">0</text><path d="M639 748h16M639 751.500h16M639 755h16M639 758.500h16" stroke="#7a9cb8" stroke-width="2" stroke-dasharray="2 1.500"/><path d="M654 752v7" stroke="#f0a030" stroke-width="2"/>
<!-- tray -->
<text x="1146" y="750" style="font-size:12px;fill:#fff">EN</text>
<path d="M1178 751h8l-4-4z" fill="#fff"/>
<path d="M1199.500 743v13" stroke="#fff" stroke-width="1.500"/><path d="M1200 743h9v7h-9z" fill="#fff"/><circle cx="1209" cy="752" r="4.500" fill="#e02020" stroke="#fff" stroke-width=".8"/><path d="M1207 750l4 4M1211 750l-4 4" stroke="#fff"/>
<rect x="1226" y="744" width="12" height="9" fill="#1a3a5a" stroke="#fff"/><path d="M1232 753v3M1228 756.500h8" stroke="#fff"/><path d="M1224 742v5h3v-5M1225.500 748v3" stroke="#fff" fill="none"/>
<path d="M1247 747h3l4-4v12l-4-4h-3z" fill="#e8f0f6"/><path d="M1256 746q2 3 0 6M1258 744q3 5 0 10" fill="none" stroke="#e8f0f6"/>
<text x="1306" y="745" text-anchor="middle" style="font-size:12px;fill:#fff">11:04</text>
<text x="1306" y="762" text-anchor="middle" style="font-size:12px;fill:#fff">14.02.2018</text>
<rect x="1346.500" y="729.500" width="13" height="38" rx="1" fill="#2a5a88" stroke="#7a9ab8" opacity=".9"/>
</svg>
</body></html>
